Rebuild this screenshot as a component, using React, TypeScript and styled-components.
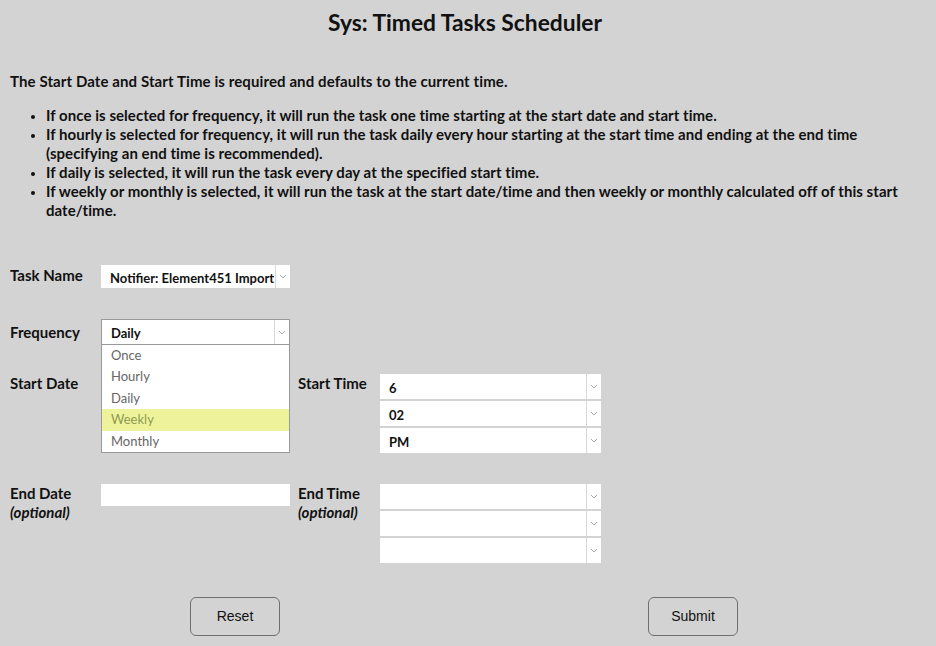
import styled, { createGlobalStyle } from 'styled-components'

const GlobalStyle = createGlobalStyle`
  html, body {
    margin: 0;
    padding: 0;
    background: #d3d3d3;
  }
  body {
    font-family: Lato, 'Open Sans', sans-serif;
    color: #111;
  }
`

const Page = styled.div`
  width: 936px;
  height: 646px;
  overflow: hidden;
  padding: 0 10px;
  box-sizing: border-box;
`

const Title = styled.h1`
  margin: 0;
  padding: 8px 6px 0 0;
  height: 50px;
  box-sizing: border-box;
  text-align: center;
  font-size: 22.8px;
  font-weight: 700;
`

const Intro = styled.p`
  margin: 22px 0 0;
  font-size: 15px;
  font-weight: 700;
  line-height: 19px;
  letter-spacing: 0.1px;
`

const Notes = styled.ul`
  margin: 15px 0 0;
  padding-left: 36px;
  font-size: 15px;
  font-weight: 700;
  line-height: 19px;
  letter-spacing: 0.05px;
  li::marker {
    font-size: 12px;
  }
`

const Form = styled.div`
  margin-top: 45px;
  display: grid;
  grid-template-columns: 91px 189px 8px 82px 221px;
`

const Label = styled.div<{ $top?: number }>`
  font-size: 15px;
  font-weight: 700;
  line-height: 19px;
  padding-top: ${(p) => p.$top ?? 0}px;
  em {
    display: block;
    font-style: italic;
  }
`

const Spacer = styled.div<{ $h: number }>`
  grid-column: 1 / -1;
  height: ${(p) => p.$h}px;
`

const Field = styled.div`
  position: relative;
`

const SelectBox = styled.div<{ $h?: number; $border?: boolean }>`
  display: flex;
  height: ${(p) => p.$h ?? 23}px;
  background: #fff;
  box-sizing: border-box;
  border: ${(p) => (p.$border ? '1px solid #9a9a9a' : 'none')};
`

const SelectValue = styled.div`
  flex: 1;
  display: flex;
  align-items: center;
  padding: 2px 9px 0;
  font-size: 13px;
  font-weight: 700;
  white-space: nowrap;
  overflow: hidden;
  border-right: 1px solid #d8d8d8;
`

const Arrow = styled.div`
  width: 14px;
  display: flex;
  align-items: center;
  justify-content: center;
  color: #aaa;
`

const Stack = styled.div`
  display: flex;
  flex-direction: column;
  gap: 2px;
`

const TextInput = styled.div`
  height: 22px;
  background: #fff;
`

const Menu = styled.ul`
  position: absolute;
  left: 0;
  right: 0;
  top: 100%;
  margin: 0;
  padding: 0;
  list-style: none;
  background: #fff;
  border: 1px solid #9a9a9a;
  border-top: none;
  z-index: 2;
`

const Option = styled.li<{ $active?: boolean }>`
  height: 21.4px;
  line-height: 21px;
  padding-left: 9px;
  font-size: 13px;
  color: ${(p) => (p.$active ? '#8e9a52' : '#666')};
  background: ${(p) => (p.$active ? '#eef39b' : '#fff')};
`

const Buttons = styled.div`
  margin-top: 34px;
  display: flex;
  padding-left: 180px;
  gap: 368px;
`

const Button = styled.button`
  width: 90px;
  height: 39px;
  padding-bottom: 2px;
  border: 1px solid #6f6f6f;
  border-radius: 6px;
  background: transparent;
  font-family: 'Liberation Sans', Arial, sans-serif;
  font-size: 14px;
  color: #111;
`

const Chevron = () => (
  <svg width="8" height="5" viewBox="0 0 8 5">
    <path d="M1 1l3 3 3-3" fill="none" stroke="currentColor" strokeWidth="1" />
  </svg>
)

const Select = ({ value, h, border }: { value?: string; h?: number; border?: boolean }) => (
  <SelectBox $h={h} $border={border}>
    <SelectValue>{value}</SelectValue>
    <Arrow>
      <Chevron />
    </Arrow>
  </SelectBox>
)

const frequencies = ['Once', 'Hourly', 'Daily', 'Weekly', 'Monthly']

export default function App() {
  return (
    <>
      <GlobalStyle />
      <Page>
        <Title>Sys: Timed Tasks Scheduler</Title>
        <Intro>The Start Date and Start Time is required and defaults to the current time.</Intro>
        <Notes>
          <li>If once is selected for frequency, it will run the task one time starting at the start date and start time.</li>
          <li>
            If hourly is selected for frequency, it will run the task daily every hour starting at the start time and ending at the end time
            (specifying an end time is recommended).
          </li>
          <li>If daily is selected, it will run the task every day at the specified start time.</li>
          <li>
            If weekly or monthly is selected, it will run the task at the start date/time and then weekly or monthly calculated off of this start
            date/time.
          </li>
        </Notes>
        <Form>
          <Label $top={1}>Task Name</Label>
          <Select value="Notifier: Element451 Import" />
          <div />
          <div />
          <div />

          <Spacer $h={31} />

          <Label $top={4}>Frequency</Label>
          <Field>
            <Select value="Daily" h={26} border />
            <Menu>
              {frequencies.map((f) => (
                <Option key={f} $active={f === 'Weekly'}>
                  {f}
                </Option>
              ))}
            </Menu>
          </Field>
          <div />
          <div />
          <div />

          <Spacer $h={29} />

          <Label>Start Date</Label>
          <TextInput />
          <div />
          <Label>Start Time</Label>
          <Stack>
            <Select value="6" h={25} />
            <Select value="02" h={25} />
            <Select value="PM" h={25} />
          </Stack>

          <Spacer $h={31} />

          <Label>
            End Date
            <em>(optional)</em>
          </Label>
          <div>
            <TextInput />
          </div>
          <div />
          <Label>
            End Time
            <em>(optional)</em>
          </Label>
          <Stack>
            <Select h={25} />
            <Select h={25} />
            <Select h={25} />
          </Stack>
        </Form>
        <Buttons>
          <Button>Reset</Button>
          <Button>Submit</Button>
        </Buttons>
      </Page>
    </>
  )
}
